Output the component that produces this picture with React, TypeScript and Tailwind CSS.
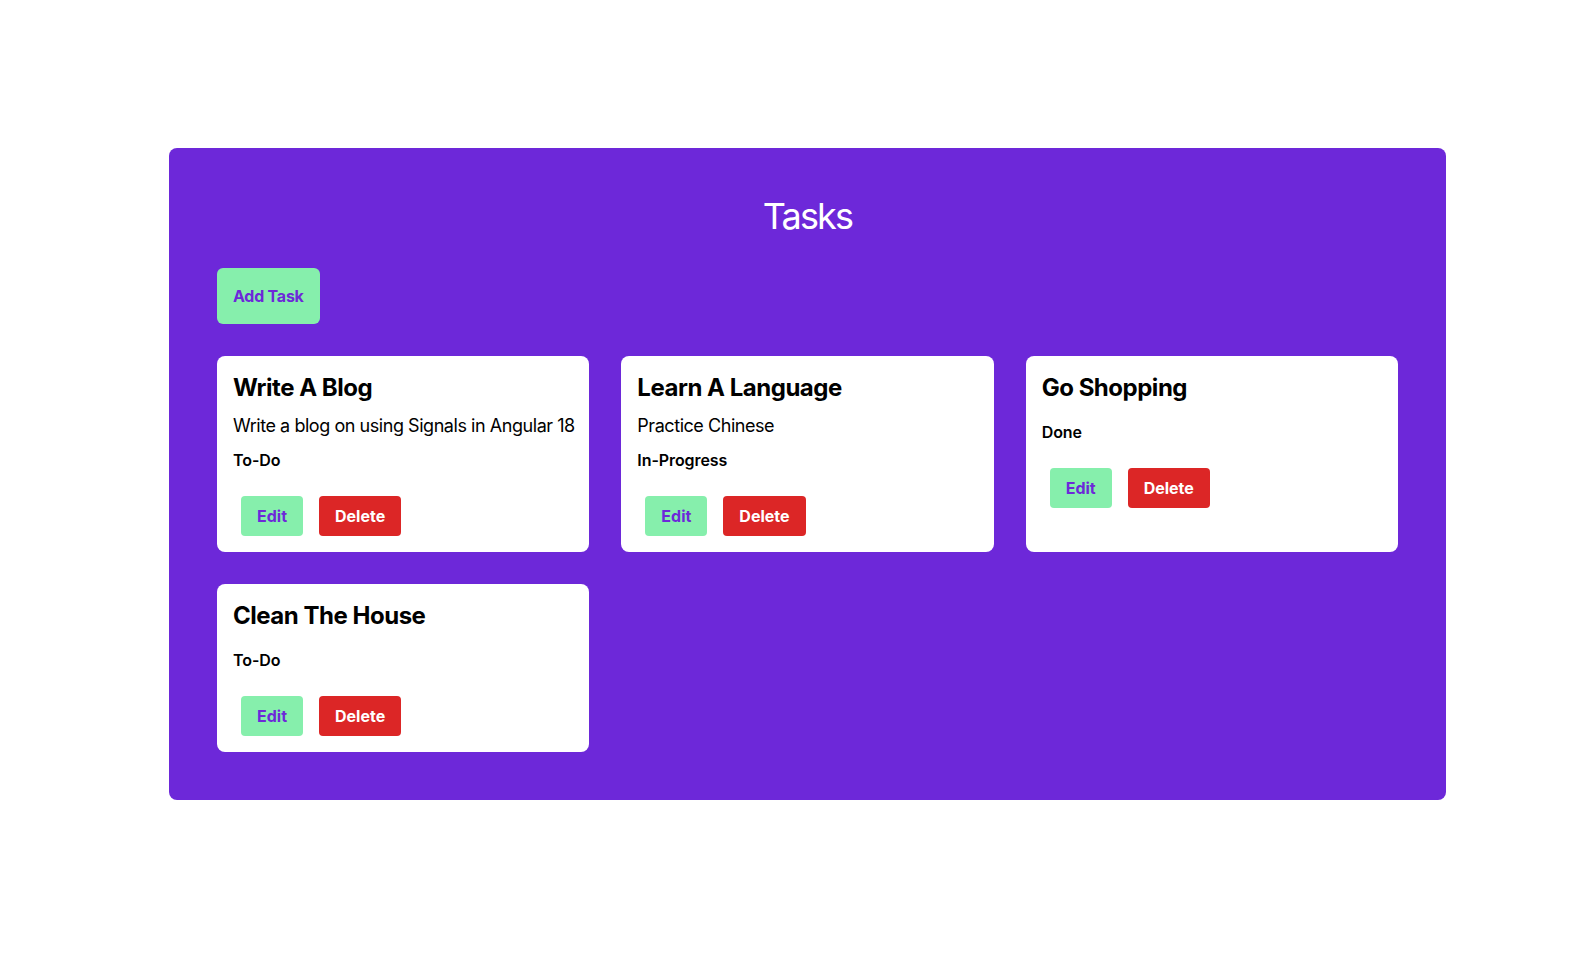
type Status = "To-Do" | "In-Progress" | "Done";

interface Task {
  id: number;
  title: string;
  description: string;
  status: Status;
}

const tasks: Task[] = [
  {
    id: 1,
    title: "Write A Blog",
    description: "Write a blog on using Signals in Angular 18",
    status: "To-Do",
  },
  {
    id: 2,
    title: "Learn A Language",
    description: "Practice Chinese",
    status: "In-Progress",
  },
  { id: 3, title: "Go Shopping", description: "", status: "Done" },
  { id: 4, title: "Clean The House", description: "", status: "To-Do" },
];

function TaskCard({ task }: { task: Task }) {
  return (
    <div className="flex flex-col bg-white p-4 rounded-lg text-black">
      <h2 className="font-bold text-2xl tracking-[-0.02em]">{task.title}</h2>
      {/* descrição vazia ainda ocupa as margens */}
      <p className="my-2 text-lg tracking-[-0.025em] whitespace-nowrap">
        {task.description}
      </p>
      <p className="font-semibold tracking-[-0.005em]">{task.status}</p>
      <div className="flex mt-6">
        <button className="bg-[#86efac] mx-2 px-4 py-2 rounded font-bold text-[#6d28d9] cursor-pointer">
          Edit
        </button>
        <button className="bg-[#dc2626] mx-2 px-4 py-2 rounded font-bold text-white cursor-pointer">
          Delete
        </button>
      </div>
    </div>
  );
}

export default function App() {
  return (
    <div className="bg-white pt-[148px] pl-[169px] w-full min-h-screen font-['Inter',sans-serif]">
      <section className="bg-[#6d28d9] p-12 rounded-lg w-[1277px]">
        <h1 className="mb-8 text-[36px] text-white text-center leading-10 tracking-[-0.05em]">
          Tasks
        </h1>
        <button className="bg-[#86efac] p-4 rounded-md font-bold text-[#6d28d9] tracking-[-0.015em] cursor-pointer">
          Add Task
        </button>
        <div className="gap-8 grid grid-cols-3 mt-8">
          {tasks.map((task) => (
            <TaskCard key={task.id} task={task} />
          ))}
        </div>
      </section>
    </div>
  );
}
